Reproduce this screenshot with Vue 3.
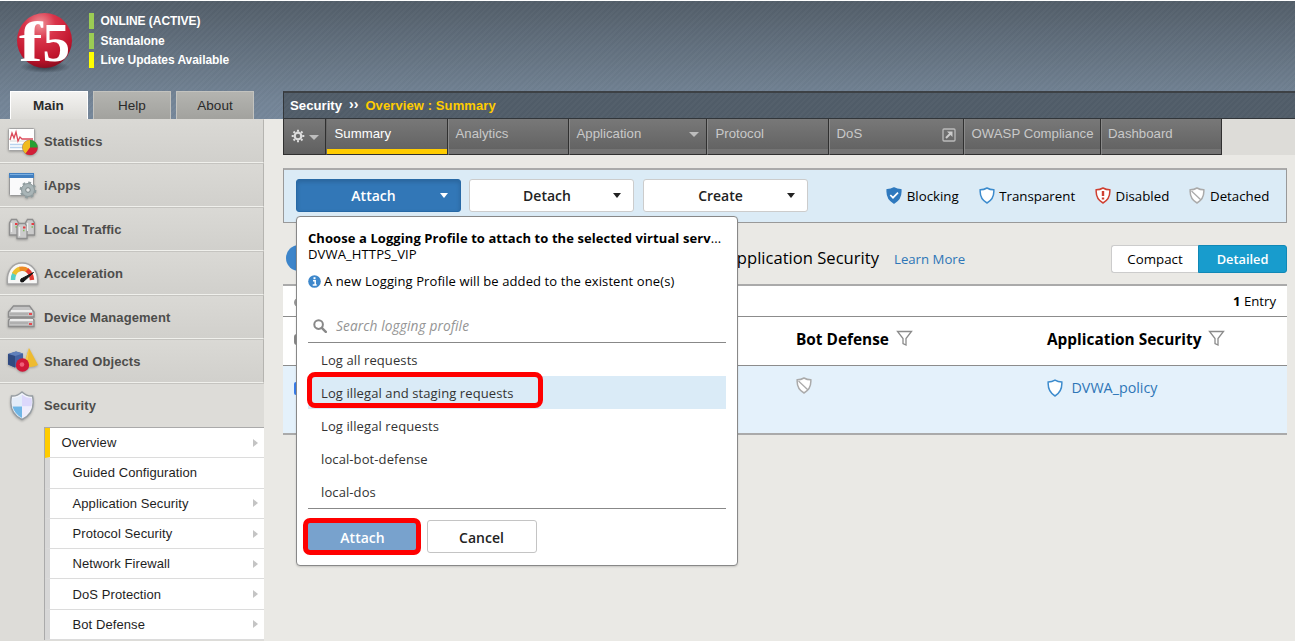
<script setup>
const modules = [
  { name: 'Statistics', icon: 'stats' },
  { name: 'iApps', icon: 'iapps' },
  { name: 'Local Traffic', icon: 'traffic' },
  { name: 'Acceleration', icon: 'gauge' },
  { name: 'Device Management', icon: 'device' },
  { name: 'Shared Objects', icon: 'objects' },
  { name: 'Security', icon: 'shield' }
]
const submenu = [
  { name: 'Overview', arrow: true, active: true },
  { name: 'Guided Configuration', arrow: false },
  { name: 'Application Security', arrow: true },
  { name: 'Protocol Security', arrow: true },
  { name: 'Network Firewall', arrow: true },
  { name: 'DoS Protection', arrow: true },
  { name: 'Bot Defense', arrow: true }
]
const tabs = [
  { name: 'Summary', cls: 't-summary' },
  { name: 'Analytics', cls: 't-analytics' },
  { name: 'Application', cls: 't-app', caret: true },
  { name: 'Protocol', cls: 't-proto' },
  { name: 'DoS', cls: 't-dos', ext: true },
  { name: 'OWASP Compliance', cls: 't-owasp' },
  { name: 'Dashboard', cls: 't-dash' }
]
const profiles = [
  'Log all requests',
  'Log illegal and staging requests',
  'Log illegal requests',
  'local-bot-defense',
  'local-dos'
]
const legend = [
  { name: 'Blocking', kind: 'block', cls: 'l-block' },
  { name: 'Transparent', kind: 'open', cls: 'l-open' },
  { name: 'Disabled', kind: 'off', cls: 'l-off' },
  { name: 'Detached', kind: 'detached', cls: 'l-det' }
]
</script>

<template>
  <div class="page">
    <header class="top">
      <svg class="logo" width="66" height="66" viewBox="0 0 66 66">
        <defs>
          <radialGradient id="ball" cx="42%" cy="20%" r="80%">
            <stop offset="0" stop-color="#f0959a" />
            <stop offset=".35" stop-color="#d9344a" />
            <stop offset=".8" stop-color="#c0142c" />
            <stop offset="1" stop-color="#8e0d20" />
          </radialGradient>
          <radialGradient id="shade"><stop offset="0" stop-color="#222b35" stop-opacity=".8" /><stop offset="1" stop-color="#222b35" stop-opacity="0" /></radialGradient>
        </defs>
        <ellipse cx="33" cy="57" rx="25" ry="6" fill="url(#shade)" />
        <circle cx="32.500" cy="30.500" r="27.500" fill="url(#ball)" />
        <text transform="translate(7 51) scale(1.22 1)" class="logo-f">f</text>
        <text x="30.500" y="50.500" class="logo-5">5</text>
      </svg>
      <div class="status">
        <div class="st"><i></i>ONLINE (ACTIVE)</div>
        <div class="st"><i></i>Standalone</div>
        <div class="st live"><i></i>Live Updates Available</div>
      </div>
      <div class="navtabs">
        <div class="navtab on">Main</div>
        <div class="navtab">Help</div>
        <div class="navtab">About</div>
      </div>
    </header>

    <div class="body">
      <aside>
        <div v-for="m in modules" :key="m.name" class="mod" :class="{ open: m.icon === 'shield' }">
          <svg class="mi" width="34" height="36" viewBox="0 0 34 36">
            <g v-if="m.icon === 'stats'">
              <rect x="3.500" y="5.500" width="26" height="22" rx="1" fill="#fff" stroke="#a4a4a4" />
              <path d="M5 18h23" stroke="#d8d8d8" /><path d="M5 21.500h23M5 24.500h23" stroke="#b9d3ee" stroke-width="1.500" />
              <path d="M5 17l2-7 2 5 2-6 2 9 2-4 2 2h11" fill="none" stroke="#dc4b5b" stroke-width="1.300" />
              <circle cx="25" cy="24.500" r="7.500" fill="#d21f38" stroke="#777" stroke-width=".6" />
              <path d="M25 24.500V17a7.500 7.500 0 0 0 0 15z" fill="#f0bb20" />
              <path d="M25 24.500L20.500 30.500A7.500 7.500 0 0 0 32.500 24.500z" fill="#d21f38" />
              <path d="M25 24.500V17a7.500 7.500 0 0 1 7.500 7.500z" fill="#27a034" />
            </g>
            <g v-else-if="m.icon === 'iapps'">
              <rect x="4.500" y="6.500" width="24" height="22" rx="1" fill="#fafafb" stroke="#999" />
              <rect x="4" y="6" width="25" height="5" fill="#417fc0" /><path d="M5 7.500h23" stroke="#79aee1" />
              <circle cx="23" cy="23" r="6.500" fill="#a9b5b7" stroke="#8b9799" />
              <circle cx="23" cy="23" r="7.300" fill="none" stroke="#909d9f" stroke-width="2.200" stroke-dasharray="2.800 2.930" />
              <circle cx="23" cy="23" r="2.300" fill="#e3e6e6" stroke="#7d888a" />
            </g>
            <g v-else-if="m.icon === 'traffic'" fill="#cbcbcb" stroke="#8e8e8e" stroke-width="1.300">
              <path d="M4.500 24V12l2-3.500h5l2 3.500v12z" /><path d="M20.500 24V12l2-3.500h5l2 3.500v12z" />
              <path d="M12 27.500V15.500l2-3h6l2 3v12z" />
              <path d="M6.500 12v9M14.500 16v9M22.500 12v8" stroke="#eee" />
              <path d="M10 13h2.500M26.500 13h2.500M18 16.500h2.500" stroke="#e53d42" stroke-width="2.200" />
              <path d="M10.500 16h1.500M26.500 16h1.500M18 19.500h1.500" stroke="#82b95c" stroke-width="1.500" />
            </g>
            <g v-else-if="m.icon === 'gauge'">
              <path d="M2.500 29c-1.500-13 5-21 14.500-21S34 16 32.500 29z" fill="#f7f7f6" stroke="#a4a4a4" stroke-width="1.500" />
              <g fill="none" stroke-width="4.500"><path d="M8 25q0-4 1.500-6.500" stroke="#57d0c7" /><path d="M9 19q2-4 6-5" stroke="#ecc02e" /><path d="M14.500 14q5-1 8 1.500" stroke="#ed8a24" /><path d="M22 15q4.500 3.500 5 10" stroke="#e33b32" /></g>
              <path d="M16 24L28.500 17.500 18 27z" fill="#161616" stroke="#161616" /><circle cx="17" cy="25.500" r="2" fill="#161616" />
            </g>
            <g v-else-if="m.icon === 'device'" fill="#c3c3c3" stroke="#8c8c8c" stroke-width="1.300">
              <path d="M3.500 13l5-6h16l4.500 6v5h-25.500z" /><path d="M3.500 21l3-2h20l2.500 2v6.500h-25.500z" />
              <path d="M6 12h21M5 21h23" stroke="#ededed" stroke-width="2" /><path d="M5 15h18M5 24h18" stroke="#aaa" />
              <path d="M24 15h3M24 25h3" stroke="#e64a50" stroke-width="2" />
            </g>
            <g v-else-if="m.icon === 'objects'">
              <path d="M24 5l9 17q-8 4-14 0z" fill="#eebb30" /><path d="M24 5l-5 17 3 1.500z" fill="#f7cb4c" />
              <path d="M3 11l8-2.500 7 2v11l-8 3-7-3z" fill="#4563a3" /><path d="M3 11l8-2.500 7 2-8 2.500z" fill="#6080bb" /><path d="M3 11l7 2v11.500l-7-3z" fill="#304a80" />
              <circle cx="17.500" cy="22" r="6.700" fill="#cf1838" /><circle cx="17" cy="21.500" r="2.300" fill="#f05f79" />
            </g>
            <g v-else>
              <path d="M17 4q-5 4.500-10.500 4-3.500 17 10.500 23.500Q31 25 27.500 8 22 8.500 17 4z" fill="#f3f6fb" stroke="#969da3" stroke-width="1.400" />
              <path d="M17 6.500v12H7.500q-1-4 0-8.500 5.500 0 9.500-3.500z" fill="#e3ecf9" /><path d="M17 6.500v12h9.500q1-4 0-8.500-5.500 0-9.500-3.500z" fill="#dcd8fb" />
              <path d="M17 18.500v11.500q-7.500-4-9.500-11.500z" fill="#6fb6e6" /><path d="M17 18.500v11.500q7.500-4 9.500-11.500z" fill="#efedfc" />
            </g>
          </svg>
          <span>{{ m.name }}</span>
        </div>
        <div class="sub">
          <div v-for="s in submenu" :key="s.name" class="si" :class="{ active: s.active }">
            <span>{{ s.name }}</span><i v-if="s.arrow"></i>
          </div>
        </div>
      </aside>

      <main>
        <div class="crumb"><b>Security</b><b class="raq">››</b><b class="here">Overview : Summary</b></div>
        <div class="tabs">
          <div class="tab gear">
            <svg width="14" height="14" viewBox="0 0 14 14"><circle cx="7" cy="7" r="3.300" fill="none" stroke="#ddd" stroke-width="2.200" /><path d="M7 .7v2M7 11.300v2M.7 7h2M11.300 7h2M2.550 2.550l1.400 1.400M10.050 10.050l1.400 1.400M2.550 11.450l1.400-1.400M10.050 3.950l1.400-1.400" stroke="#ddd" stroke-width="2" /></svg>
            <i class="tri"></i>
          </div>
          <div v-for="t in tabs" :key="t.name" class="tab" :class="t.cls">
            <span>{{ t.name }}</span>
            <i v-if="t.caret" class="tri"></i>
            <svg v-if="t.ext" class="ext" width="14" height="14" viewBox="0 0 14 14"><rect x="1" y="1" width="12" height="12" rx="1" fill="none" stroke="#bbb" stroke-width="1.300" /><path d="M4 10l5-5" stroke="#ccc" stroke-width="2" /><path d="M5 3.500h5.500V9z" fill="#ccc" /></svg>
          </div>
        </div>

        <section class="bar">
          <div class="btn primary"><span>Attach</span><i></i></div>
          <div class="btn"><span>Detach</span><i></i></div>
          <div class="btn"><span>Create</span><i></i></div>
          <div v-for="l in legend" :key="l.name" class="leg" :class="l.cls">
            <svg width="16" height="17" viewBox="0 0 16 17">
              <path d="M8 1Q5 2.800 1.200 2.800 .5 12 8 16 15.500 12 14.800 2.800 11 2.800 8 1z" class="sh" :class="l.kind" />
              <path v-if="l.kind === 'block'" d="M4.300 8l2.700 2.700 5-5" fill="none" stroke="#fff" stroke-width="1.700" />
              <path v-if="l.kind === 'off'" d="M8 4v5M8 10.500v2" stroke="#cf3f31" stroke-width="2.400" />
              <path v-if="l.kind === 'detached'" d="M2.500 4l9.500 9" stroke="#aaa" stroke-width="1.300" />
            </svg>
            <span>{{ l.name }}</span>
          </div>
        </section>

        <section class="title">
          <div class="num"></div>
          <h1>Application Security</h1>
          <a>Learn More</a>
          <div class="toggle"><span>Compact</span><span class="sel">Detailed</span></div>
        </section>

        <section class="table">
          <div class="tr count"><div class="peek round"></div><p><b>1</b> Entry</p></div>
          <div class="tr head">
            <div class="peek box"></div>
            <div class="c1">Bot Defense
              <svg width="17" height="17" viewBox="0 0 17 17"><path d="M1.500 1.500h14L10 8.500v6.500l-3-1.500v-5z" class="funnel" /></svg>
            </div>
            <div class="c2">Application Security
              <svg width="17" height="17" viewBox="0 0 17 17"><path d="M1.500 1.500h14L10 8.500v6.500l-3-1.500v-5z" class="funnel" /></svg>
            </div>
          </div>
          <div class="tr row">
            <div class="peek blue"></div>
            <div class="c1"><svg width="16" height="17" viewBox="0 0 16 17"><path d="M8 1Q5 2.800 1.200 2.800 .5 12 8 16 15.500 12 14.800 2.800 11 2.800 8 1z" class="sh detached" /><path d="M2.500 4l9.500 9" stroke="#aaa" stroke-width="1.300" /></svg></div>
            <div class="c2"><svg width="16" height="18" viewBox="0 0 16 17" preserveAspectRatio="none"><path d="M8 1Q5 2.800 1.200 2.800 .5 12 8 16 15.500 12 14.800 2.800 11 2.800 8 1z" class="sh open" /></svg><a>DVWA_policy</a></div>
          </div>
        </section>

        <div class="popup">
          <h2>Choose a Logging Profile to attach to the selected virtual serv<span>...</span></h2>
          <p class="vip">DVWA_HTTPS_VIP</p>
          <p class="info">
            <svg width="13" height="13" viewBox="0 0 13 13"><circle cx="6.500" cy="6.500" r="6.300" fill="#3d87cb" /><path d="M5 5.700h2.200v4M4.700 9.900h4" fill="none" stroke="#fff" stroke-width="1.500" /><rect x="5.500" y="2.200" width="2" height="2" fill="#fff" /></svg>
            <span>A new Logging Profile will be added to the existent one(s)</span>
          </p>
          <div class="search">
            <svg width="14" height="14" viewBox="0 0 14 14"><circle cx="5.600" cy="5.600" r="4.300" fill="none" stroke="#888" stroke-width="2" /><path d="M8.800 8.800l4 4" stroke="#888" stroke-width="2.400" stroke-linecap="round" /></svg>
            <span>Search logging profile</span>
          </div>
          <div class="list">
            <div v-for="(p, i) in profiles" :key="p" class="opt" :class="{ hl: i === 1 }"><span>{{ p }}</span></div>
          </div>
          <div class="actions"><div class="go">Attach</div><div class="cancel">Cancel</div></div>
          <div class="ring"></div>
        </div>
      </main>
    </div>
  </div>
</template>

<style>
body { background: #fff; overflow: hidden; }
</style>

<style scoped>
* { box-sizing: border-box; }
h1, h2, p { margin: 0; font-weight: normal; }
.page { width: 1295px; height: 641px; overflow: hidden; background: #eae9e5; font-family: "Liberation Sans", Arial, sans-serif; font-size: 13px; color: #222; }
.top { height: 119px; border-top: 1px solid #fff; position: relative; display: grid; grid-template-columns: 89px 1fr; grid-template-rows: 90px 28px;
  background: repeating-linear-gradient(135deg, rgba(255,255,255,.018) 0 2px, rgba(0,0,0,.012) 2px 4px), linear-gradient(#535e69, #738496 85%, #75879a); }
.logo { margin: 9px 0 0 12px; }
.logo-f { font: bold 58px "Liberation Serif", serif; fill: #fff; }
.logo-5 { font: bold 55px "Liberation Serif", serif; fill: #fff; }
.status { padding-top: 12px; color: #fff; font-weight: bold; font-size: 12px; letter-spacing: -.05px; }
.st { height: 16px; margin-bottom: 3.500px; display: flex; align-items: center; }
.st i { width: 5px; height: 16px; background: #9ccc54; margin-right: 6.500px; }
.live i { background: #ff0; }
.navtabs { grid-column: 1 / 3; display: flex; gap: 5px; padding-left: 10px; }
.navtab { width: 78px; height: 28px; border: 1px solid #c3c3bf; border-bottom: 0; background: linear-gradient(#b4b4b0, #a2a29e); text-align: center; line-height: 27px; font-size: 13.500px; color: #2a2a2a; }
.navtab.on { background: linear-gradient(#f4f3f1, #dddcd8); font-weight: bold; border-color: #fff; padding-right: 1px; }
.body { display: flex; height: 522px; }
aside { width: 264px; flex: none; background: #dddcd8; }
.mod { height: 44px; display: flex; align-items: center; padding-left: 5px; font-weight: bold; font-size: 13px; color: #4d4d4b; background: linear-gradient(#dad9d5, #d1d0cc); border-bottom: 1px solid #f0f0ec; border-top: 1px solid #c5c4c0; border-right: 1px solid #b5b4b0; }
.mod:first-child { border-top-color: #dad9d5; }
.mod span { margin-left: 5px; letter-spacing: .08px; }
.mi { filter: drop-shadow(0 1px 1px rgba(0,0,0,.25)); }
.mod.open { background: #dddcd8; border-bottom: 0; border-right: 0; }
.mod.open span { padding-bottom: 1px; }
.sub { margin-left: 44px; border-left: 1px solid #aaa; border-top: 1px solid #aaa; background: #fff; }
.si { height: 30.300px; display: flex; align-items: center; justify-content: space-between; border-left: 5px solid #d7d7d7; border-bottom: 1px solid #dcdcdc; padding: 0 6px 0 22.500px; color: #1e1e1e; letter-spacing: .09px; }
.si.active { border-left-color: #fc0; padding-left: 11.500px; }
.si i { border: 4px solid transparent; border-left: 5px solid #c4c4c4; border-right: 0; }
main { position: relative; flex: 1; margin-top: -28px; padding-left: 19px; height: 550px; font-family: "Open Sans", sans-serif; color: #000; }
.crumb { height: 28px; border: 1px solid #32363a; border-top: 2px solid #3d4145; border-right: 0; display: flex; align-items: center; padding: 0 0 1px 6px; color: #fff; font-family: "Liberation Sans", Arial, sans-serif; font-size: 13.200px;
  background: repeating-linear-gradient(135deg, rgba(255,255,255,.022) 0 2px, transparent 2px 4px), #505c68; }
.raq { margin: -2px 7px 0; font-size: 14px; }
.here { color: #fc0; font-size: 13px; letter-spacing: .1px; }
.tabs { height: 36px; display: flex; background: #dddcd8; font-family: "Liberation Sans", Arial, sans-serif; font-size: 13.200px; letter-spacing: .02px; color: #c9c9c9; }
.tab { position: relative; height: 36px; background: linear-gradient(#787878, #606060); border-right: 1px solid #303030; border-bottom: 1px solid #303030; border-left: 1px solid #8a8a8a; box-shadow: inset 0 -5px #747474; display: flex; justify-content: space-between; padding: 7px 7px 0 6.500px; white-space: nowrap; }
.gear { width: 43px; border-left: 1px solid #303030; padding: 10px 6px 0 7px; box-shadow: none; }
.gear .tri { margin-top: 6px; }
.tri { width: 0; height: 0; border: 5px solid transparent; border-top: 5px solid #bdbdbd; border-bottom: 0; margin-top: 6px; }
.t-summary { width: 122px; color: #fff; border-left-color: #666; box-shadow: inset 0 -5px #fc0; padding-left: 7.500px; }
.t-analytics { width: 121px; } .t-app { width: 138px; } .t-proto { width: 122px; padding-left: 7.500px; } .t-dos { width: 135px; } .t-owasp { width: 137px; padding-right: 0; } .t-dash { width: 121px; padding-left: 6px; }
.ext { margin-top: 2px; }
.bar { margin-top: 13px; width: 1004px; height: 55px; border: 1px solid #999; border-top: 2px solid #aaa; background: #dbebf6; display: flex; align-items: flex-start; padding: 9px 0 0 12px; position: relative; }
.btn { width: 165px; height: 33px; margin-right: 8.500px; border: 1px solid #ccc; border-radius: 3px; background: #fff; display: flex; align-items: center; font-weight: 600; font-size: 14px; color: #222; }
.btn span { width: 154px; text-align: center; }
.btn i { border: 4.500px solid transparent; border-top: 5px solid #222; border-bottom: 0; margin-right: 11px; margin-left: -11px; }
.primary { background: #3277b7; border-color: #2769a6; color: #fff; box-shadow: inset 0 2px 4px rgba(0,0,0,.15); }
.primary i { border-top-color: #fff; }
.bar .btn { margin-left: -.5px; margin-right: 9px; }
.leg { display: flex; align-items: center; height: 33px; gap: 4.500px; font-size: 13.300px; white-space: nowrap; }
.l-block { margin-left: 69.700px; width: 92.500px; } .l-open { width: 116.300px; } .l-off { width: 94.500px; }
.sh { fill: #fff; stroke-width: 1.500; } .sh.block { fill: #2f79be; stroke: #2f79be; } .sh.open { stroke: #3c8bcd; } .sh.off { stroke: #cf3f31; } .sh.detached { stroke: #aaa; }
.title { height: 61px; width: 1004px; display: flex; align-items: center; padding-top: 10px; position: relative; }
.num { width: 26px; height: 26px; border-radius: 50%; background: #3d85ca; margin: -2px 0 0 3px; }
h1 { width: 567px; text-align: right; font-size: 16.600px; padding-bottom: 3px; }
a { color: #2e76b7; }
.title a { margin-left: 15px; font-size: 13.200px; }
.toggle { margin-left: auto; display: flex; font-size: 13.300px; line-height: 26px; text-align: center; }
.toggle span { height: 28px; width: 87px; background: #fff; border: 1px solid #ccc; border-right: 0; border-radius: 3px 0 0 3px; }
.toggle .sel { width: 89px; background: #189ccd; color: #fff; border: 1px solid #1088b6; border-radius: 0 3px 3px 0; font-weight: 600; font-size: 12.800px; }
.table { width: 1004px; border-top: 2px solid #aaa; border-bottom: 2px solid #aaa; background: #fff; }
.tr { position: relative; display: flex; align-items: center; }
.count { height: 31px; border-bottom: 1px solid #8c8c8c; justify-content: flex-end; padding-right: 11px; font-size: 13.200px; }
.head { height: 49px; border-bottom: 1px solid #8c8c8c; font-weight: bold; font-size: 15.400px; padding-bottom: 3px; }
.head svg { vertical-align: -2px; margin-left: 3px; }
.row { height: 67px; background: #e4f1fb; align-items: flex-start; }
.c1 { margin-left: 513px; width: 251px; white-space: nowrap; }
.c2 { white-space: nowrap; }
.row .c1 { padding-top: 11px; } .row .c2 { padding-top: 12px; display: flex; align-items: center; gap: 8.500px; font-size: 14.300px; }
.funnel { fill: #fff; stroke: #8b8b8b; stroke-width: 1.300; }
.peek { position: absolute; left: 11px; top: 12px; width: 11px; height: 11px; }
.round { border: 2px solid #999; border-radius: 50%; width: 9px; height: 9px; }
.box { border: 2px solid #888; border-radius: 3px; top: 17px; } .blue { background: #397dea; border-radius: 2px; top: 16px; height: 13px; }
.popup { position: absolute; left: 32px; top: 125px; width: 442px; height: 350px; border: 1px solid #888; border-radius: 4px; background: #fff; padding: 0 11px; box-shadow: 0 1px 2px rgba(0,0,0,.15); }
h2 { margin-top: 13px; height: 16px; line-height: 17px; font-weight: bold; font-size: 13px; letter-spacing: .08px; white-space: nowrap; }
h2 span { font-weight: normal; }
.vip { height: 17px; line-height: 17px; font-size: 13.100px; letter-spacing: .08px; }
.info { margin-top: 8px; height: 20px; display: flex; align-items: center; gap: 3px; font-size: 13px; letter-spacing: .1px; white-space: nowrap; }
.search { margin-top: 19px; height: 33px; border-bottom: 1px solid #888; display: flex; align-items: center; gap: 9px; padding: 0 0 1px 5px; font-size: 13.700px; letter-spacing: .1px; font-style: italic; color: #949494; }
.list { height: 166px; border-bottom: 1px solid #888; }
.opt { height: 33px; line-height: 34px; padding-left: 13px; font-size: 13px; letter-spacing: .1px; color: #333; position: relative; }
.hl { background: #daebf7; }
.actions { display: flex; padding-top: 9px; margin-left: -5px; }
.go { width: 118px; height: 37px; border: 5px solid #f00; border-radius: 7px; background: #78a2cd; color: #fff; font-weight: 600; font-size: 14px; text-align: center; line-height: 29px; padding-left: 1px; }
.cancel { width: 110px; height: 33px; margin: 2px 0 0 5.500px; border: 1px solid #c4c4c4; border-radius: 3px; font-weight: 600; font-size: 14px; text-align: center; line-height: 33px; color: #222; }
.ring { position: absolute; left: 10px; top: 155px; width: 236px; height: 36px; border: 5px solid #f00; border-radius: 8px; }
</style>
